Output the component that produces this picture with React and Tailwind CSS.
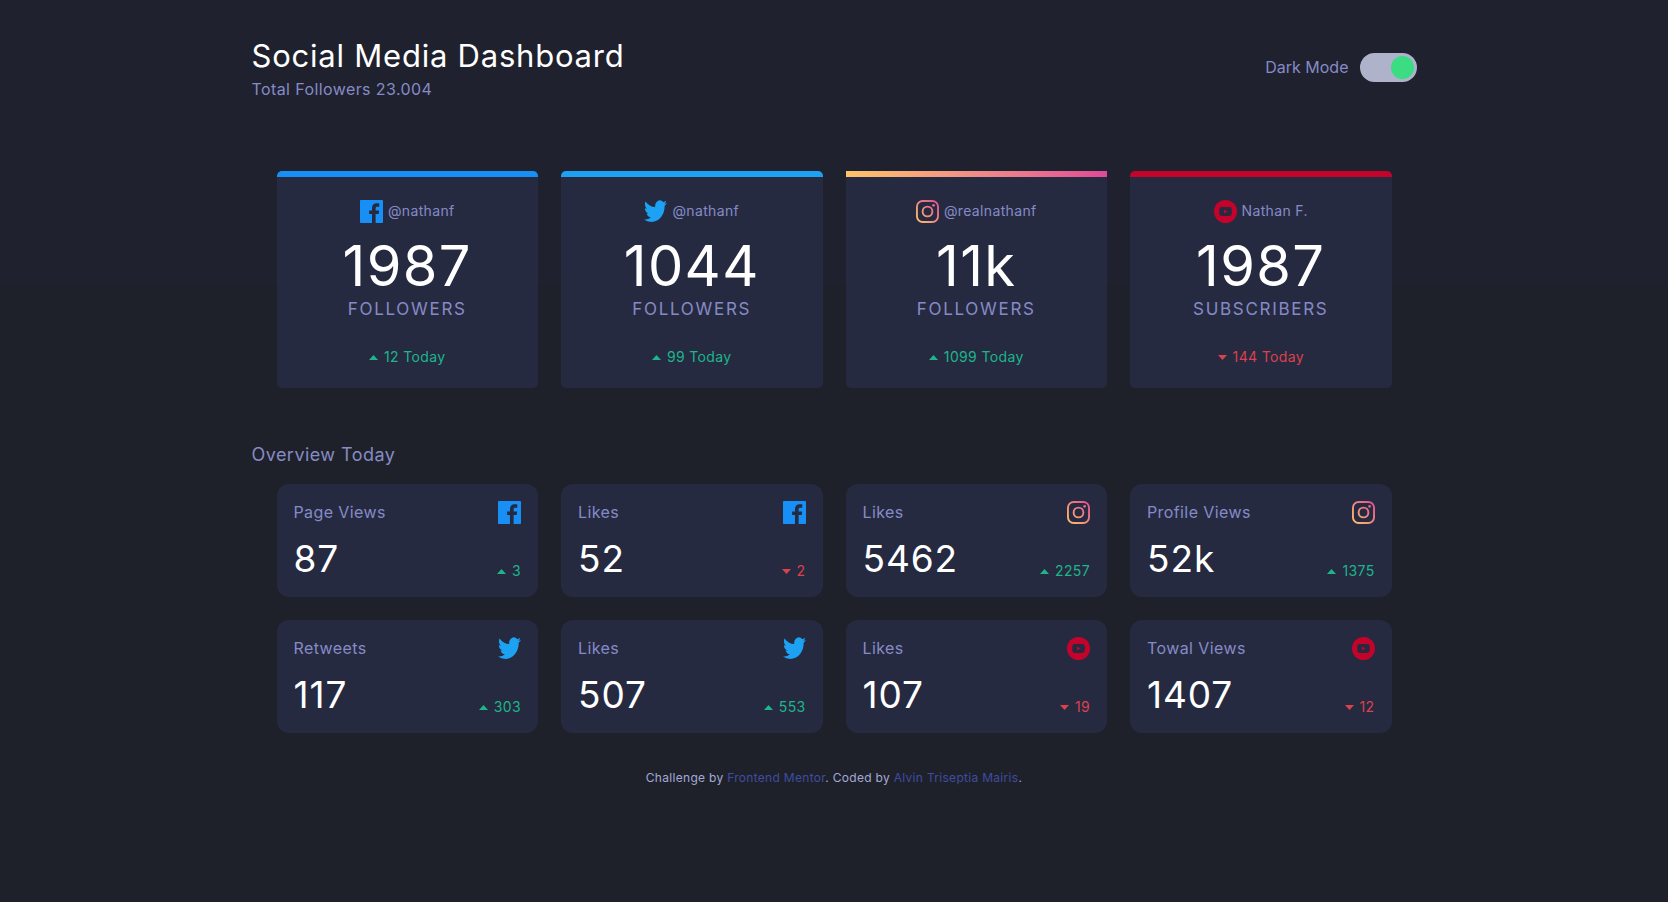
import { useState } from "react";

const followers = [
  { icon: "facebook", name: "@nathanf", count: "1987", label: "Followers", today: "12 Today", up: true, bar: "bg-[#178ff5]", round: "rounded-[5px]" },
  { icon: "twitter", name: "@nathanf", count: "1044", label: "Followers", today: "99 Today", up: true, bar: "bg-[#1da1f2]", round: "rounded-[5px]" },
  { icon: "instagram", name: "@realnathanf", count: "11k", label: "Followers", today: "1099 Today", up: true, bar: "bg-linear-to-r from-[#fdc468] to-[#df4996]", round: "rounded-b-[5px]" },
  { icon: "youtube", name: "Nathan F.", count: "1987", label: "Subscribers", today: "144 Today", up: false, bar: "bg-[#c4032b]", round: "rounded-[5px]" },
];

const overview = [
  { icon: "facebook", title: "Page Views", count: "87", change: "3", up: true },
  { icon: "facebook", title: "Likes", count: "52", change: "2", up: false },
  { icon: "instagram", title: "Likes", count: "5462", change: "2257", up: true },
  { icon: "instagram", title: "Profile Views", count: "52k", change: "1375", up: true },
  { icon: "twitter", title: "Retweets", count: "117", change: "303", up: true },
  { icon: "twitter", title: "Likes", count: "507", change: "553", up: true },
  { icon: "youtube", title: "Likes", count: "107", change: "19", up: false },
  { icon: "youtube", title: "Towal Views", count: "1407", change: "12", up: false },
];

function Icon({ name }) {
  if (name === "facebook") {
    return (
      <svg className="h-[23px] w-[23px]" viewBox="0 0 24 24" fill="#178ff5">
        <path d="M23.2 0H.8C.3 0 0 .3 0 .8v22.4c0 .5.3.8.8.8h11.7v-9.3H9.5v-3.8h3V8.4c0-3.1 1.900-4.900 4.800-4.900 1.300 0 2.400.1 2.800.15v3.500h-1.900c-1.500 0-1.900.7-1.900 1.800v1.950h3.700l-.5 3.800h-3.200V24h6.900c.5 0 .8-.3.8-.8V.8c0-.5-.3-.8-.8-.8z" />
      </svg>
    );
  }

  if (name === "twitter") {
    return (
      <svg className="h-[23px] w-[23px]" viewBox="0 0 24 24" fill="#1da1f2">
        <path
          transform="translate(0 -0.4) scale(1 1.15)"
          d="M23.953 3.07a10 10 0 01-2.825.775 4.958 4.958 0 002.163-2.723c-.951.555-2.005.959-3.127 1.184a4.92 4.92 0 00-8.384 4.482C7.69 6.595 4.067 4.63 1.64 1.662a4.822 4.822 0 00-.666 2.475c0 1.71.87 3.213 2.188 4.096a4.904 4.904 0 01-2.228-.616v.06a4.923 4.923 0 003.946 4.827 4.996 4.996 0 01-2.212.085 4.936 4.936 0 004.604 3.417 9.867 9.867 0 01-6.102 2.105c-.39 0-.779-.023-1.17-.067a13.995 13.995 0 007.557 2.209c9.053 0 13.998-7.496 13.998-13.985 0-.21 0-.42-.015-.63A9.935 9.935 0 0024 3.09z"
        />
      </svg>
    );
  }

  if (name === "instagram") {
    return (
      <svg className="h-[23px] w-[23px]" viewBox="0 0 24 24" fill="none">
        <defs>
          <linearGradient id="insta" x1="0" y1="24" x2="24" y2="0" gradientUnits="userSpaceOnUse">
            <stop offset="0" stopColor="#fdc468" />
            <stop offset="1" stopColor="#df4996" />
          </linearGradient>
        </defs>
        <rect x="1" y="1" width="22" height="22" rx="6" stroke="url(#insta)" strokeWidth="2" />
        <circle cx="12" cy="12" r="5.1" stroke="url(#insta)" strokeWidth="2" />
        <circle cx="18.4" cy="5.6" r="1.4" fill="url(#insta)" />
      </svg>
    );
  }

  return (
    <svg className="h-[23px] w-[23px]" viewBox="0 0 24 24" fill="#c4032b">
      <circle cx="12" cy="12" r="12" />
      <rect x="5.5" y="7.3" width="13" height="9.4" rx="2.6" fill="#252a41" />
      <path d="M10.4 9.9v4.2l3.9-2.1z" />
    </svg>
  );
}

function Change({ up, children }) {
  return (
    <p
      className={`flex items-center gap-[6px] text-sm leading-5 tracking-wide ${
        up ? "text-[#1eb589]" : "text-[#dc414c]"
      }`}
    >
      <svg className="h-[5px] w-[9px]" viewBox="0 0 9 5" fill="currentColor">
        <path d={up ? "M0 5L4.5 0 9 5z" : "M0 0l4.5 5L9 0z"} />
      </svg>
      {children}
    </p>
  );
}

export default function App() {
  const [dark, setDark] = useState(true);

  return (
    <div className="min-h-screen bg-[linear-gradient(#1f212e_285px,#1e2129_285px)] font-['Inter',sans-serif] text-[#868bc6]">
      <div className="mx-auto max-w-[1165px]">

        {/* HEADER */}
        <header className="flex items-center justify-between pt-9">
          <div>
            <h1 className="text-[31px] leading-10 tracking-wide text-white">
              Social Media Dashboard
            </h1>
            <p className="leading-[26px] tracking-wide">Total Followers 23.004</p>
          </div>

          <label className="flex items-center gap-[11px] pb-1">
            <span>Dark Mode</span>
            <input
              type="checkbox"
              checked={dark}
              onChange={(e) => setDark(e.target.checked)}
              className="peer sr-only"
            />
            <span className="flex h-[29px] w-[57px] items-center rounded-full bg-[#aeb3cb] p-[3px] peer-checked:justify-end">
              <span className="h-[23px] w-[23px] rounded-full bg-[#3cdc83]" />
            </span>
          </label>
        </header>

        {/* FOLLOWER CARDS */}
        <section className="mt-[69px] grid grid-cols-4 gap-[23px] px-[25px]">
          {followers.map((card, index) => (
            <article key={index} className={`overflow-hidden bg-[#252a41] ${card.round}`}>
              <div className={`h-[6px] ${card.bar}`} />
              <div className="flex flex-col items-center pt-[22px] pb-[21px]">
                <div className="flex items-center gap-[5px] text-sm leading-6 tracking-wide">
                  <Icon name={card.icon} />
                  <span>{card.name}</span>
                </div>
                <p className="mt-3 text-[56px] leading-[62px] tracking-wide text-white">
                  {card.count}
                </p>
                <p className="text-[17px] leading-6 tracking-widest uppercase">{card.label}</p>
                <div className="mt-[26px]">
                  <Change up={card.up}>{card.today}</Change>
                </div>
              </div>
            </article>
          ))}
        </section>

        {/* OVERVIEW */}
        <h2 className="mt-[55px] text-lg leading-6 tracking-wide">Overview Today</h2>

        <section className="mt-[17px] grid grid-cols-4 gap-[23px] px-[25px]">
          {overview.map((item, index) => (
            <article key={index} className="rounded-xl bg-[#252a41] px-[17px] py-4">
              <div className="flex items-center justify-between">
                <h3 className="leading-6 tracking-wide">{item.title}</h3>
                <Icon name={item.icon} />
              </div>
              <div className="mt-[13px] flex items-end justify-between">
                <p className="text-[37px] leading-[44px] tracking-wide text-white">{item.count}</p>
                <Change up={item.up}>{item.change}</Change>
              </div>
            </article>
          ))}
        </section>

        {/* FOOTER */}
        <footer className="mt-[35px] text-center text-xs leading-5 tracking-wide text-[#a5a9d8]">
          Challenge by{" "}
          <a href="#frontend-mentor" className="text-[#3e4da3]">Frontend Mentor</a>. Coded by{" "}
          <a href="#author" className="text-[#3e4da3]">Alvin Triseptia Mairis</a>.
        </footer>

      </div>
    </div>
  );
}
